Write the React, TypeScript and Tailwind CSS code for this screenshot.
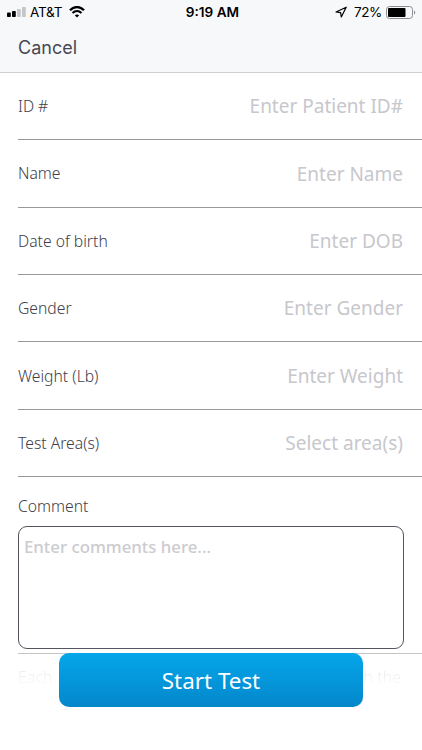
const FIELDS = [
  { id: "patient-id", label: "ID #", placeholder: "Enter Patient ID#" },
  { id: "name", label: "Name", placeholder: "Enter Name" },
  { id: "dob", label: "Date of birth", placeholder: "Enter DOB" },
  { id: "gender", label: "Gender", placeholder: "Enter Gender" },
  { id: "weight", label: "Weight (Lb)", placeholder: "Enter Weight" },
  { id: "areas", label: "Test Area(s)", placeholder: "Select area(s)" },
];

function StatusBar() {
  return (
    <div className="grid h-6 grid-cols-3 items-center pl-[7px] pr-[6px] text-[13.5px] text-black">
      <div className="flex items-center">
        <svg className="h-[10px] w-[19px]" viewBox="0 0 19 10">
          <rect x="0" y="5.5" width="3.8" height="4.5" rx="0.8" />
          <rect x="5" y="4" width="3.8" height="6" rx="0.8" />
          <rect x="10" y="2" width="3.8" height="8" rx="0.8" fill="#c4c5c8" />
          <rect x="15" y="0" width="3.8" height="10" rx="0.8" fill="#c4c5c8" />
        </svg>
        <span className="ml-[4px] tracking-[-0.2px]">AT&amp;T</span>
        <svg className="ml-[7px] h-[12px] w-[16px]" viewBox="0 0 16 12">
          <path d="M1 4.3C5-.1 11-.1 15 4.3" fill="none" stroke="#000" strokeWidth="2.3" />
          <path d="M3.5 7.1c2.7-2.6 6.3-2.6 9 0" fill="none" stroke="#000" strokeWidth="2.1" />
          <path d="M5.8 9.3c1.3-1.2 3.1-1.2 4.4 0L8 11.6z" />
        </svg>
      </div>
      <span className="pl-[2px] text-center text-[13.6px] font-semibold">9:19 AM</span>
      <div className="flex items-center justify-end">
        <svg className="h-[12px] w-[12px]" viewBox="0 0 12 12">
          <path d="M11.2 1.2 1 6l4.6.7.7 4.3z" fill="none" stroke="#000" strokeWidth="1.2" strokeLinejoin="round" />
        </svg>
        <span className="ml-[7px] tracking-[-0.4px]">72%</span>
        <svg className="ml-[4px] h-[13px] w-[30px]" viewBox="0 0 30 13">
          <rect x="0.5" y="0.5" width="26" height="12" rx="3" fill="none" stroke="#8c8d90" />
          <rect x="2" y="2" width="17.5" height="9" rx="1" />
          <path d="M28 4.5c1.7.6 1.7 3.4 0 4z" fill="#8c8d90" />
        </svg>
      </div>
    </div>
  );
}

export default function App() {
  return (
    <div className="relative h-[750px] w-[422px] overflow-hidden bg-white font-['Noto_Sans',sans-serif]">
      <header className="h-[73px] border-b border-[#cfd0d2] bg-[#f7f8fa] font-['Inter',sans-serif]">
        <StatusBar />
        <button className="ml-[18px] mt-[10px] block text-[18px] leading-7 text-[#484852]">Cancel</button>
      </header>

      <form className="ml-[18px]">
        {FIELDS.map((field) => (
          <div
            key={field.id}
            className="flex h-[67.35px] items-center justify-between border-b border-[#98989d] pr-[19px]"
          >
            <label htmlFor={field.id} className="shrink-0 pt-[1.5px] text-[15.7px] font-light text-[#40404a]">
              {field.label}
            </label>
            <input
              id={field.id}
              placeholder={field.placeholder}
              className="w-[220px] pt-[0.5px] text-right text-[19px] outline-none placeholder:text-[#c7c7cc]"
            />
          </div>
        ))}

        <div className="h-[177px] border-b border-[#c5c5c8] pr-[18px] pt-[17px]">
          <label htmlFor="comment" className="block text-[15.7px] font-light leading-6 text-[#40404a]">
            Comment
          </label>
          <textarea
            id="comment"
            placeholder="Enter comments here..."
            className="mt-[8px] block h-[123px] w-full resize-none rounded-[9px] border border-[#555560] px-[5px] pt-[8px] text-[16.8px] leading-6 outline-none placeholder:font-medium placeholder:text-[#cbcbd0]"
          />
        </div>
        {/* Disclaimer line fading out at the bottom of the scroll area */}
        <div className="flex justify-between pr-[21px] pt-[11px] text-[16px] font-light leading-6">
          <span className="bg-linear-to-b from-[#e2e2e4] to-white bg-clip-text text-transparent">Each</span>
          <span className="bg-linear-to-b from-[#e2e2e4] to-white bg-clip-text text-transparent">with the</span>
        </div>
      </form>

      {/* Floating action over the form */}
      <button className="absolute bottom-[43px] left-[59px] h-[54px] w-[304px] rounded-[10px] bg-linear-to-b from-[#06a6ea] to-[#0487cb] pt-[2px] text-[22.4px] text-white">
        Start Test
      </button>
    </div>
  );
}
